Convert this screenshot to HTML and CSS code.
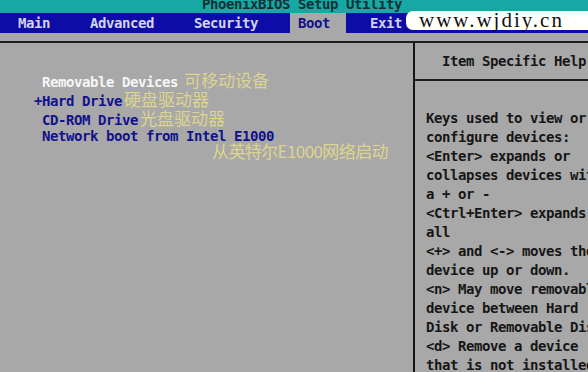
FILE: index.html
```html
<!DOCTYPE html>
<html lang="en">
<head>
  <meta charset="UTF-8" />
  <title>PhoenixBIOS Setup Utility</title>
  <link rel="stylesheet" href="styles.css">
</head>
<body>
  <div class="screen">
    <div class="title">PhoenixBIOS Setup Utility</div>
    <div class="menu">
      <span class="tab">Main</span>
      <span class="tab">Advanced</span>
      <span class="tab">Security</span>
      <span class="tab active">Boot</span>
      <span class="tab">Exit</span>
    </div>
    <div class="watermark">www.wjdiy.cn</div>

    <div class="main">
      <div class="boot-list">
        <div class="row label"> Removable Devices <span class="cn">可移动设备</span></div>
        <div class="row">+Hard Drive<span class="cn">硬盘驱动器</span></div>
        <div class="row"> CD-ROM Drive<span class="cn">光盘驱动器</span></div>
        <div class="row"> Network boot from Intel E1000</div>
        <div class="cn note">从英特尔E1000网络启动</div>
      </div>
      <div class="help">
        <div class="help-title">Item Specific Help</div>
        <div class="help-text">Keys used to view or
configure devices:
&lt;Enter&gt; expands or
collapses devices with
a + or -
&lt;Ctrl+Enter&gt; expands
all
&lt;+&gt; and &lt;-&gt; moves the
device up or down.
&lt;n&gt; May move removable
device between Hard
Disk or Removable Disk
&lt;d&gt; Remove a device
that is not installed.</div>
      </div>
    </div>
  </div>
</body>
</html>
```
FILE: styles.css
```css
body {
  margin: 0;
  padding: 0;
  background: #a8a8a8;
}
.screen {
  position: relative;
  width: 588px;
  height: 372px;
  overflow: hidden;
  background: #a8a8a8;
  font-family: "DejaVu Sans Mono", "Liberation Mono", monospace;
  font-weight: bold;
  font-size: 14px;
  letter-spacing: -0.43px;
}
.title {
  height: 13px;
  background: #17a8a4;
  color: #0c3238;
  line-height: 8px;
  padding-left: 202px;
  white-space: pre;
  overflow: hidden;
}
.menu {
  display: flex;
  height: 20px;
  background: #0d0ca6;
  padding-left: 18px;
}
.tab {
  color: #d4d4ee;
  line-height: 20px;
  margin-right: 40px;
}
.tab.active {
  background: #a8a8a8;
  color: #12128c;
  margin-left: -8px;
  margin-right: 24px;
  padding: 0 16px 0 8px;
}
.watermark {
  position: absolute;
  left: 406px;
  top: 11px;
  width: 190px;
  height: 19px;
  background: #fff;
  border-radius: 7px 0 0 7px;
  color: #111;
  font-family: "Liberation Serif", serif;
  font-weight: normal;
  font-size: 21px;
  letter-spacing: 2px;
  line-height: 19px;
  padding-left: 13px;
}
.main {
  display: grid;
  grid-template-columns: 413px 1fr;
  margin-top: 8px;
  border-top: 2px solid #1c1c1c;
  height: 330px;
}
.boot-list {
  padding: 27px 0 0 34px;
  color: #11118c;
}
.row {
  height: 19px;
  line-height: 19px;
  white-space: pre;
}
.label {
  color: #f6f6f6;
}
.cn {
  font-family: "Noto Sans CJK SC", sans-serif;
  font-weight: normal;
  font-size: 17px;
  letter-spacing: 0;
  color: #ddd58e;
}
.row .cn {
  margin-left: 2px;
}
.label .cn {
  margin-left: -2px;
}
.note {
  margin-top: -5px;
  padding-left: 178px;
  line-height: 19px;
  letter-spacing: -0.6px;
}
.help {
  border-left: 2px solid #141414;
  color: #161616;
}
.help-title {
  height: 36px;
  line-height: 36px;
  padding-left: 27px;
  white-space: pre;
  border-bottom: 2px solid #1c1c1c;
}
.help-text {
  padding: 28px 0 0 11px;
  line-height: 19px;
  white-space: pre;
  overflow: hidden;
}
```
